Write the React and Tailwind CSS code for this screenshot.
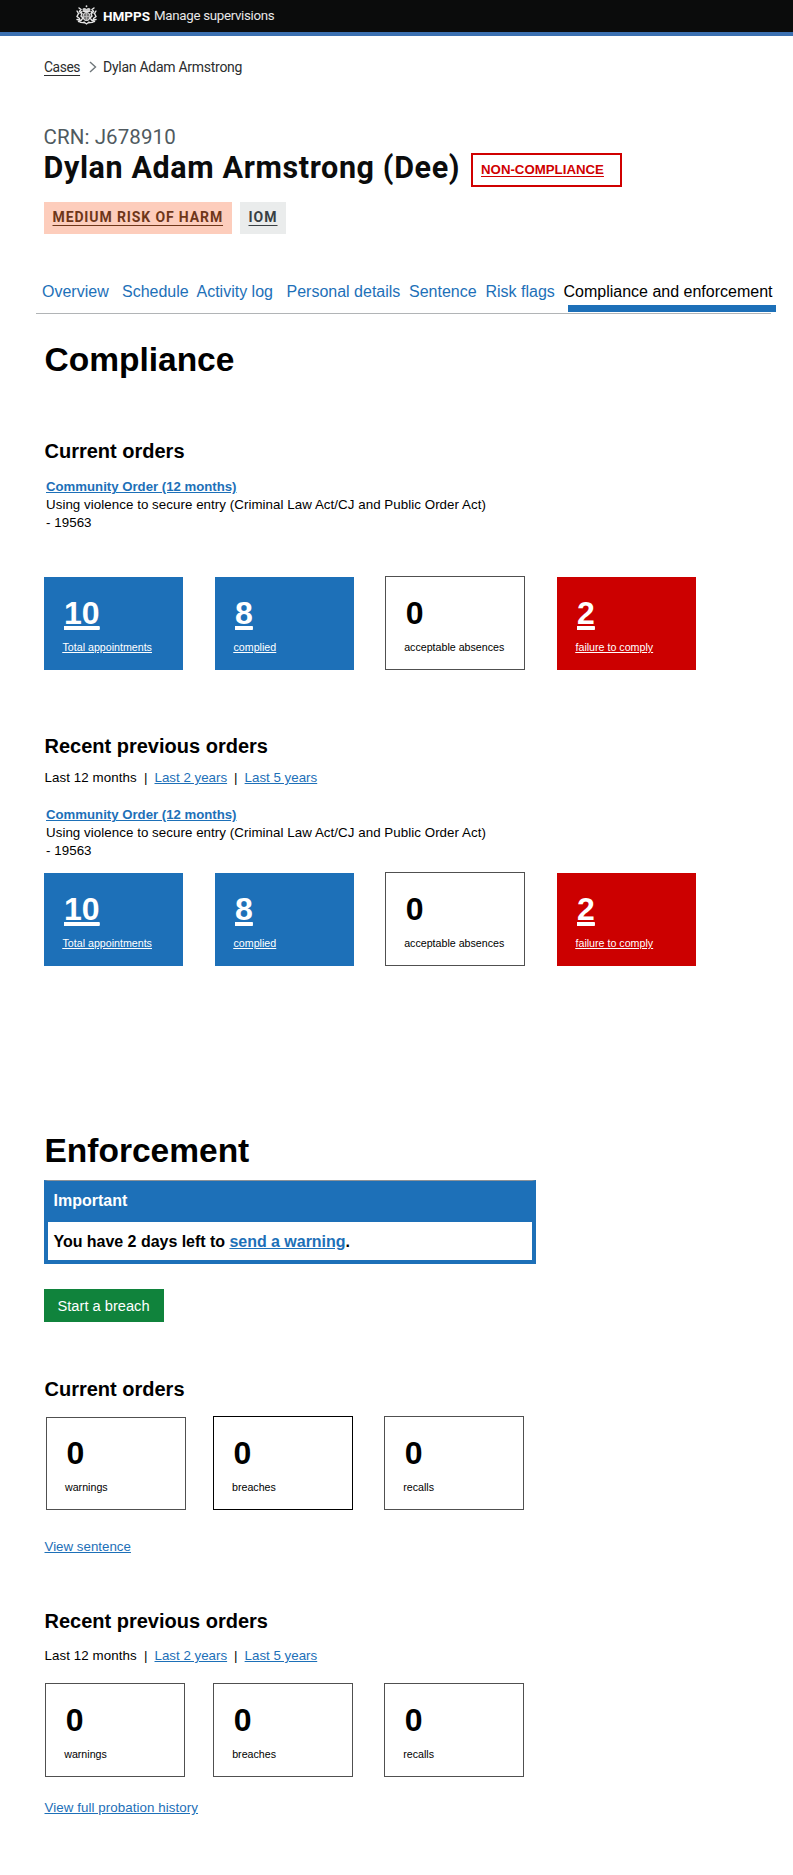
const sans = "font-['Liberation_Sans',Arial,sans-serif]";
const transport = "font-['Roboto',sans-serif]";

function Crest() {
  return (
    <svg viewBox="0 0 42 40" className="h-[20px] w-[21px]" fill="none" stroke="#e6e6e6" strokeLinecap="round">
      <circle cx="21" cy="2.5" r="1.8" fill="#ddd" stroke="none" />
      <path d="M14 12c-4-6 4-8 7-4 3-4 11-2 7 4z" fill="#ccc" stroke="none" />
      <path d="M15 13h12" strokeWidth="2" />
      <ellipse cx="21" cy="23" rx="7" ry="8" fill="#777" strokeWidth="2.2" />
      <path d="M21 16v14M15 23h12" stroke="#bbb" strokeWidth="1.6" />
      <path d="M6 6l4 3-3 4 5 4-2 5 4 4-4 5-5 2M2 12l3 5-3 6 5 4M12 13l-4 3M2 29l6 1" strokeWidth="2.8" />
      <path d="M36 6l-4 3 3 4-5 4 2 5-4 4 4 5 5 2M40 12l-3 5 3 6-5 4M30 13l4 3M40 29l-6 1" strokeWidth="2.8" />
      <path d="M6 33c5 4 9 1 15 4 6-3 10 0 15-4M16 34l5 4 5-4" strokeWidth="2.6" />
    </svg>
  );
}

const tones = {
  blue: "bg-[#1d70b8] w-[139px] h-[93px] pl-[18.5px] pt-[18px] text-white underline",
  red: "bg-[#cc0000] w-[139px] h-[93px] pl-[18.5px] pt-[18px] text-white underline",
  plain: "border border-[#505050] bg-white w-[140px] h-[94px] pl-[18.2px] pt-[18px] text-black",
  short: "border border-[#505050] bg-white w-[140px] h-[93px] pl-[18px] pt-[17px] text-black",
  black: "border border-black bg-white w-[140px] h-[94px] pl-[18px] pt-[18px] text-black",
};

function Card({ tone, value, label, className = "" }) {
  return (
    <div className={`shrink-0 ${tones[tone]} ${className}`}>
      <div className="pl-[1.5px] text-[32px] leading-[36px] font-bold underline-offset-[3px] decoration-[3px] [text-decoration-line:inherit]">{value}</div>
      <div className="mt-[9px] text-[10.667px] leading-[14px] underline-offset-[1px] [text-decoration-line:inherit]">{label}</div>
    </div>
  );
}

function ComplianceCards({ className }) {
  return (
    <div className={`flex items-end ${className}`}>
      <Card tone="blue" value="10" label="Total appointments" className="ml-[44px]" />
      <Card tone="blue" value="8" label="complied" className="ml-[32px]" />
      <Card tone="plain" value="0" label="acceptable absences" className="ml-[31px]" />
      <Card tone="red" value="2" label="failure to comply" className="ml-[32px]" />
    </div>
  );
}

const link = "text-[#1d70b8] underline underline-offset-[1px]";

function Filters({ className }) {
  return (
    <div className={`flex pl-[44.5px] text-[13.333px] leading-[18px] ${className}`}>
      <span className="w-[99.5px] tracking-[0.08px]">Last 12 months</span>
      <span className="w-[10.5px]">|</span>
      <a className={link}>Last 2 years</a>
      <span className="ml-[7px] w-[10.5px]">|</span>
      <a className={link}>Last 5 years</a>
    </div>
  );
}

function Order({ className }) {
  return (
    <div className={`pl-[46px] text-[13.333px] leading-[18px] ${className}`}>
      <a className={`block text-[13.2px] font-bold ${link}`}>Community Order (12 months)</a>
      <p className="w-[460px] tracking-[0.05px]">
        Using violence to secure entry (Criminal Law Act/CJ and Public Order Act)
        <br />- 19563
      </p>
    </div>
  );
}

function SubHeading({ children, className }) {
  return <h2 className={`pl-[44.5px] text-[20px] leading-[24px] font-bold ${className}`}>{children}</h2>;
}

export default function App() {
  return (
    <div className={`h-[1875px] w-[793px] overflow-hidden bg-white text-black ${sans}`}>
      <header className={`flex h-[36px] items-start border-b-4 border-[#3b70b1] bg-[#0b0c0c] pl-[76px] pt-[5px] text-white ${transport}`}>
        <Crest />
        <span className="mt-[1px] ml-[6px] w-[51px] text-[13.5px] leading-[20px] font-bold">HMPPS</span>
        <span className="mt-[1px] text-[13.3px] leading-[20px] tracking-[-0.3px] text-[#e8e8e8]">Manage supervisions</span>
      </header>

      <nav className={`mt-[21px] flex h-[20px] pl-[44px] text-[14px] leading-[20px] tracking-[-0.27px] text-[#2b2d2e] ${transport}`}>
        <a className="mr-[9px] w-[36px] text-[13.8px] tracking-[-0.4px] whitespace-nowrap underline underline-offset-[3px]">Cases</a>
        <svg viewBox="0 0 8 12" className="mt-[4px] h-[12px] w-[8px]" fill="none" stroke="#6f777b" strokeWidth="1.4">
          <path d="M1 1l5.5 5L1 11" />
        </svg>
        <span className="ml-[6px]">Dylan Adam Armstrong</span>
      </nav>

      <div className={`mt-[48px] h-[24px] pl-[43.5px] text-[20.5px] leading-[24px] tracking-[0.1px] text-[#505a5f] ${transport}`}>CRN: J678910</div>
      <div className="mt-[1px] flex h-[37px] pl-[43.5px]">
        <h1 className={`w-[427px] shrink-0 text-[30.5px] leading-[36px] font-bold tracking-[0.62px] whitespace-nowrap text-[#0b0c0c] ${transport}`}>Dylan Adam Armstrong (Dee)</h1>
        <a className="mt-[3px] h-[34px] w-[151px] border-2 border-[#d00000] pl-[8.5px] pt-[5px] text-[13.25px] leading-[20px] font-bold text-[#d00000] underline underline-offset-[2px]">NON-COMPLIANCE</a>
      </div>
      <div className={`mt-[15px] flex gap-[8px] pl-[43.5px] text-[14px] leading-[20px] font-bold ${transport}`}>
        <a className="h-[32px] w-[188px] bg-[#fdcdbc] pl-[9px] pt-[5px] tracking-[0.88px] text-[#6e3619] underline underline-offset-[3px]">MEDIUM RISK OF HARM</a>
        <a className="h-[32px] w-[46.5px] bg-[#eaecec] pl-[9px] pt-[5px] tracking-[1px] text-[#383f43] underline underline-offset-[3px]">IOM</a>
      </div>

      <div className="mt-[48px] ml-[36px] h-[32px] w-[735px] border-b border-[#b1b4b6]">
        <div className="grid w-[757px] grid-cols-[80px_74.5px_90px_122.5px_76.5px_78px_auto] pl-[6px] text-[16px] leading-[20px] whitespace-nowrap text-[#1d70b8]">
          <a>Overview</a>
          <a>Schedule</a>
          <a>Activity log</a>
          <a>Personal details</a>
          <a>Sentence</a>
          <a>Risk flags</a>
          <a className="text-black">Compliance and enforcement</a>
        </div>
        <div className="mt-[3px] ml-[532px] h-[7px] w-[208px] bg-[#1d70b8]" />
      </div>

      <section className="h-[792px] pt-[26px]">
        <h1 className="pl-[44.5px] text-[33.5px] leading-[40px] font-bold">Compliance</h1>
        <SubHeading className="mt-[59px]">Current orders</SubHeading>
        <Order className="mt-[15px]" />
        <ComplianceCards className="mt-[44px]" />
        <SubHeading className="mt-[64px]">Recent previous orders</SubHeading>
        <Filters className="mt-[11px]" />
        <Order className="mt-[19px]" />
        <ComplianceCards className="mt-[12px]" />
      </section>

      <section className="pt-[25px]">
        <h1 className="pl-[44.5px] text-[33.5px] leading-[40px] font-bold">Enforcement</h1>
        <div className="mt-[9px] ml-[44px] h-[84px] w-[492px] border-4 border-t border-[#1d70b8] border-t-[#8c9298] text-[16px] font-bold">
          <div className="h-[41px] bg-[#1d70b8] pt-[10px] pl-[5.5px] leading-[20px] text-white">Important</div>
          <div className="pt-[10px] pl-[5.5px] leading-[20px] tracking-[-0.03px]">
            You have 2 days left to <a className={link}>send a warning</a>.
          </div>
        </div>
        <button className="mt-[25px] ml-[44px] block h-[33px] w-[120px] bg-[#10833c] pl-[13.5px] text-left text-[14.667px] leading-[32px] text-white">Start a breach</button>

        <SubHeading className="mt-[55px]">Current orders</SubHeading>
        <div className="mt-[15px] flex items-end pl-[46px]">
          <Card tone="short" value="0" label="warnings" />
          <Card tone="black" value="0" label="breaches" className="ml-[27px]" />
          <Card tone="plain" value="0" label="recalls" className="ml-[31px]" />
        </div>
        <div className="mt-[28px] pl-[44.5px] text-[13.333px] leading-[18px]"><a className={link}>View sentence</a></div>

        <SubHeading className="mt-[53px]">Recent previous orders</SubHeading>
        <Filters className="mt-[14px]" />
        <div className="mt-[18px] flex items-end pl-[45px]">
          <Card tone="plain" value="0" label="warnings" />
          <Card tone="plain" value="0" label="breaches" className="ml-[28px]" />
          <Card tone="plain" value="0" label="recalls" className="ml-[31px]" />
        </div>
        <div className="mt-[22px] pl-[44.5px] text-[13.333px] leading-[18px] tracking-[0.07px]"><a className={link}>View full probation history</a></div>
      </section>
    </div>
  );
}
